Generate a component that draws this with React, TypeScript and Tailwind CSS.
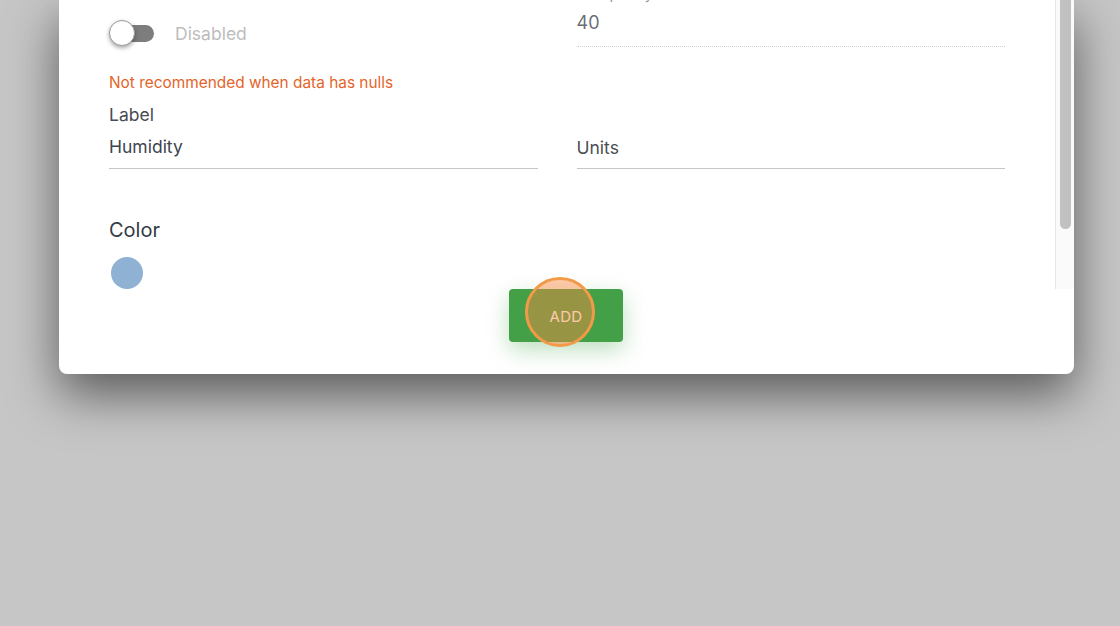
import React from "react";

const font = { fontFamily: "Inter, 'Noto Sans', sans-serif" };

function Toggle() {
  return (
    <div className="relative flex h-[26px] w-[46px] items-center">
      <div className="ml-[1px] h-[17px] w-[44px] rounded-full bg-[#7d7d7d]" />
      <div className="absolute left-0 top-0 h-[26px] w-[26px] rounded-full border border-[#9a9a9a] bg-white shadow-[0_2px_4px_rgba(0,0,0,0.35)]" />
    </div>
  );
}

export default function App() {
  return (
    <div
      className="h-[626px] w-[1120px] overflow-hidden bg-[#c6c6c6]"
      style={font}
    >
      <div className="ml-[59px] w-[1015px] rounded-b-[8px] bg-white shadow-[0_20px_50px_rgba(0,0,0,0.55)]">
        {/* scrolling body */}
        <div className="flex h-[289px] overflow-hidden">
          <div className="flex-1 overflow-hidden px-[50px]">
            <div className="-mt-[16px] grid grid-cols-2 gap-x-[39px]">
              <div className="flex items-end">
                <div className="flex items-center gap-[20px]">
                  <Toggle />
                  <span className="mt-[1px] text-[17.5px] text-[#bdbdbd]">Disabled</span>
                </div>
              </div>
              <div>
                <div className="h-[20px] text-[15px] leading-[20px] text-[#9a9a9a]">
                  Fill opacity
                </div>
                <div className="h-[43px] border-b border-dotted border-[#cfcfcf] pt-[7px] text-[18px] leading-[24px] text-[#6b6f76]">
                  40
                </div>
              </div>

              <div>
                <div className="mt-[26px] text-[15.4px] leading-[20px] text-[#e4642a]">
                  Not recommended when data has nulls
                </div>
                <div className="mt-[12px] text-[17.5px] leading-[20px] text-[#474b50]">
                  Label
                </div>
                <div className="border-b border-[#c6c6c6] pb-[9px] pt-[10px] text-[17.5px] leading-[24px] text-[#3c4450]">
                  Humidity
                </div>
              </div>
              <div className="self-end">
                <div className="border-b border-[#c6c6c6] pb-[8px] pt-[10px] text-[17.5px] leading-[24px] text-[#4a4d52]">
                  Units
                </div>
              </div>
            </div>

            <div className="mt-[47px] text-[20px] leading-[28px] text-[#333b45]">
              Color
            </div>
            <div className="ml-[2px] mt-[13px] h-[32px] w-[32px] rounded-full bg-[#8fb1d4]" />
          </div>

          {/* scrollbar */}
          <div className="w-[19px] shrink-0 border-l border-[#e6e6e6] bg-[#fafafa]">
            <div className="ml-[4px] h-[229px] w-[11px] rounded-b-full bg-[#c1c1c1]" />
          </div>
        </div>

        {/* footer */}
        <div className="flex justify-center pb-[32px] pr-[1px]">
          <button
            type="button"
            className="relative flex h-[53px] w-[114px] items-center justify-center rounded-[4px] bg-[#43a047] pt-[3px] text-[15px] tracking-[0.02em] text-white shadow-[0_8px_22px_rgba(67,160,71,0.35)]"
          >
            ADD
            <span className="absolute left-[16px] top-[-12px] h-[70px] w-[70px] rounded-full border-[3px] border-[#f29a48] bg-[rgba(255,135,62,0.45)]" />
          </button>
        </div>
      </div>
    </div>
  );
}
